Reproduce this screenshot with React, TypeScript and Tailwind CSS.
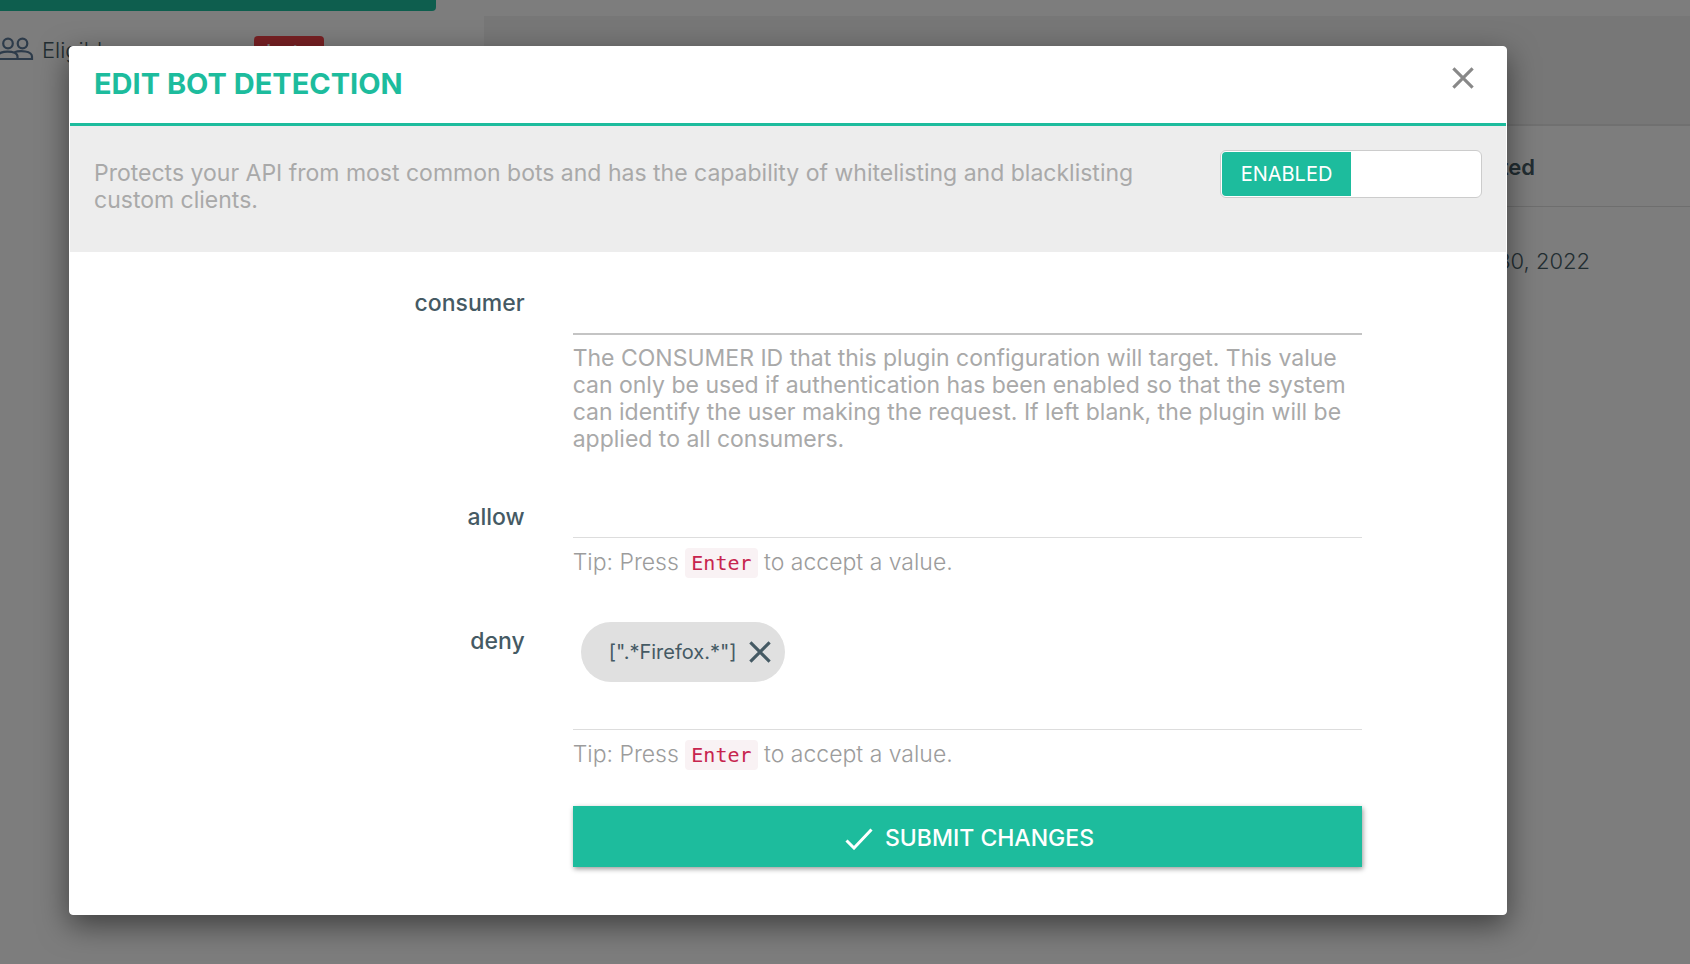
import { useState } from 'react';
import type { ReactNode } from 'react';

interface FieldProps {
  id: string;
  label: string;
  children: ReactNode;
}

/** One form row: right-aligned label with its control beside it */
function Field({ id, label, children }: FieldProps) {
  return (
    <div className="grid grid-cols-12">
      <label htmlFor={id} className="col-span-4 px-6 pt-[6px] text-right font-medium text-[#455a64]">
        {label}
      </label>
      <div className="col-span-7 px-6">{children}</div>
    </div>
  );
}

function Tip() {
  return (
    <p className="mt-2 h-8 leading-8 font-light text-[#9c9c9c]">
      Tip: Press{' '}
      <code className="inline-block rounded bg-[#f9f2f4] px-[6px] font-['DejaVu_Sans_Mono',monospace] text-[20px] leading-[30px] font-normal text-[#c7254e]">
        Enter
      </code>{' '}
      to accept a value.
    </p>
  );
}

function CrossIcon({ className }: { className: string }) {
  return (
    <svg viewBox="0 0 24 24" className={className} fill="none" stroke="currentColor" strokeWidth="3.4" aria-hidden="true">
      <path d="M1.5 1.5 22.5 22.5M22.5 1.5 1.5 22.5" />
    </svg>
  );
}

/** The portal page that lies behind the dialog */
function Page() {
  return (
    <div className="flex min-h-screen bg-[#fafafa] text-[22px] text-[#455a64]">
      <nav className="w-[484px] shrink-0">
        <div className="h-[11px] w-[436px] rounded-br bg-[#1dbc9d]" />
        <a href="#eligible" className="mt-5 flex items-start">
          <svg viewBox="0 0 34 24" className="mt-[6px] h-6 w-[34px]" fill="none" stroke="#5b7795" strokeWidth="2.2" aria-hidden="true">
            <circle cx="8" cy="6.500" r="4.800" />
            <circle cx="22.500" cy="6.500" r="4.800" />
            <path d="M-2 22H17.500V19.500C17.500 13-2 13-2 19M14 15.500C20 13 32 14 32 19.500V22H17" />
          </svg>
          <span className="ml-2 leading-[38px] font-light">Eligible</span>
          <span className="mt-[5px] mr-[160px] ml-auto rounded bg-[#ef4146] px-3 text-[22px] leading-8 text-white">
            beta
          </span>
        </a>
      </nav>
      <main className="mt-4 flex grow flex-col bg-[#eeeeee] pt-[108px]">
        <div className="grow border-t-2 border-[#e0e0e0] bg-[#fafafa]">
          <table className="w-full">
            <thead>
              <tr className="h-20 border-b border-[#dddddd]">
                <th className="w-[1051px] pt-1 text-right font-semibold">Created</th>
                <th />
              </tr>
            </thead>
            <tbody>
              <tr className="h-[103px]">
                <td colSpan={2} className="pt-2 pr-[100px] text-right font-light">
                  April 30, 2022
                </td>
              </tr>
            </tbody>
          </table>
        </div>
      </main>
    </div>
  );
}

export default function App() {
  const [enabled, setEnabled] = useState(true);

  return (
    <div className="relative min-h-screen overflow-hidden font-[Inter,sans-serif]">
      <Page />

      {/* Backdrop and dialog */}
      <div className="absolute inset-0 bg-black/50 pt-[46px] pr-[183px] pb-12 pl-[69px]">
        <div
          role="dialog"
          aria-labelledby="title"
          className="rounded border border-white bg-white pb-[47px] text-[23px] leading-[27px] shadow-[0_10px_30px_rgba(0,0,0,0.5)]"
        >
          <header className="flex h-[79px] items-start justify-between border-b-[3px] border-[#1dbc9d] pt-5 pr-8 pl-6">
            <h1 id="title" className="text-[29px] leading-[34px] font-bold text-[#1dbc9d]">
              EDIT BOT DETECTION
            </h1>
            <button type="button" aria-label="Close" className="text-[#888888]">
              <CrossIcon className="size-[22px]" />
            </button>
          </header>

          <div className="flex h-[126px] items-start justify-between bg-[#ededed] px-6 pt-6">
            <p className="max-w-[1080px] pt-[10px] text-[#a9a9a9]">
              Protects your API from most common bots and has the capability of whitelisting and blacklisting custom
              clients.
            </p>
            <button
              type="button"
              role="switch"
              aria-checked={enabled}
              onClick={() => setEnabled(!enabled)}
              className="flex h-12 w-[262px] shrink-0 overflow-hidden rounded-md border border-[#cccccc] bg-white p-px text-[20px] text-white"
            >
              <span className="flex h-full w-1/2 items-center justify-center rounded-l bg-[#1dbc9d]">
                {enabled ? 'ENABLED' : 'DISABLED'}
              </span>
            </button>
          </div>

          <form onSubmit={(e) => e.preventDefault()} className="pt-8">
            <Field id="consumer" label="consumer">
              <input id="consumer" className="block h-[51px] w-full border-b-2 border-[#c4c4c4] outline-none" />
              <p className="mt-[10px] text-[#a9a9a9]">
                The CONSUMER ID that this plugin configuration will target. This value can only be used if
                authentication has been enabled so that the system can identify the user making the request. If left
                blank, the plugin will be applied to all consumers.
              </p>
            </Field>

            <div className="mt-[45px]">
              <Field id="allow" label="allow">
                <input id="allow" className="block h-10 w-full border-b border-[#dddddd] outline-none" />
                <Tip />
              </Field>
            </div>

            <div className="mt-11">
              <Field id="deny" label="deny">
                <span className="ml-2 flex h-[60px] w-fit items-center gap-3 rounded-full bg-[#e0e0e0] pr-[14px] pl-7 text-[20px] text-[#455a64]">
                  [".*Firefox.*"]
                  <button type="button" aria-label="Remove">
                    <CrossIcon className="size-[22px]" />
                  </button>
                </span>
                <input id="deny" className="block h-12 w-full border-b border-[#dddddd] outline-none" />
                <Tip />
              </Field>
            </div>

            <div className="mt-9 grid grid-cols-12">
              <div className="col-span-7 col-start-5 px-6">
                <button
                  type="submit"
                  className="flex h-[61px] w-full items-center justify-center gap-3 bg-[#1dbc9d] pt-1 pl-1 font-medium text-white shadow-[1px_2px_5px_rgba(0,0,0,0.4)]"
                >
                  <svg viewBox="0 0 28 22" className="h-[22px] w-7" fill="none" stroke="currentColor" strokeWidth="3" aria-hidden="true">
                    <path d="M1.500 12.500 9 20 26.500 1.500" />
                  </svg>
                  SUBMIT CHANGES
                </button>
              </div>
            </div>
          </form>
        </div>
      </div>
    </div>
  );
}
